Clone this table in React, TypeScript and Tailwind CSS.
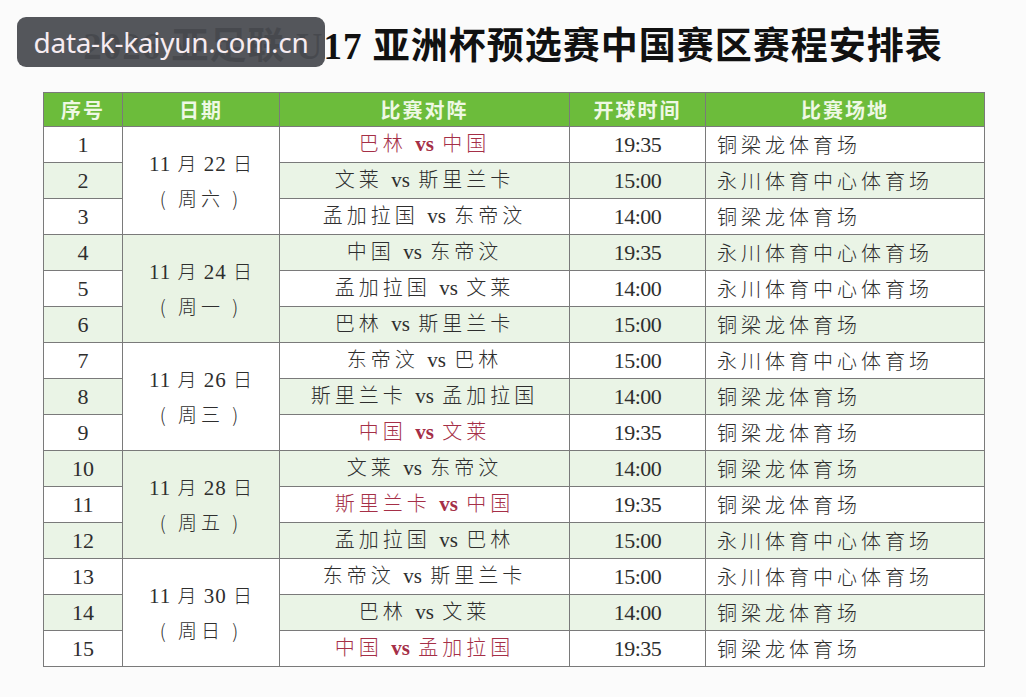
const matches = [
  { no: 1, home: "巴林", away: "中国", time: "19:35", venue: "铜梁龙体育场", hi: true },
  { no: 2, home: "文莱", away: "斯里兰卡", time: "15:00", venue: "永川体育中心体育场" },
  { no: 3, home: "孟加拉国", away: "东帝汶", time: "14:00", venue: "铜梁龙体育场" },
  { no: 4, home: "中国", away: "东帝汶", time: "19:35", venue: "永川体育中心体育场" },
  { no: 5, home: "孟加拉国", away: "文莱", time: "14:00", venue: "永川体育中心体育场" },
  { no: 6, home: "巴林", away: "斯里兰卡", time: "15:00", venue: "铜梁龙体育场" },
  { no: 7, home: "东帝汶", away: "巴林", time: "15:00", venue: "永川体育中心体育场" },
  { no: 8, home: "斯里兰卡", away: "孟加拉国", time: "14:00", venue: "铜梁龙体育场" },
  { no: 9, home: "中国", away: "文莱", time: "19:35", venue: "铜梁龙体育场", hi: true },
  { no: 10, home: "文莱", away: "东帝汶", time: "14:00", venue: "铜梁龙体育场" },
  { no: 11, home: "斯里兰卡", away: "中国", time: "19:35", venue: "铜梁龙体育场", hi: true },
  { no: 12, home: "孟加拉国", away: "巴林", time: "15:00", venue: "永川体育中心体育场" },
  { no: 13, home: "东帝汶", away: "斯里兰卡", time: "15:00", venue: "永川体育中心体育场" },
  { no: 14, home: "巴林", away: "文莱", time: "14:00", venue: "铜梁龙体育场" },
  { no: 15, home: "中国", away: "孟加拉国", time: "19:35", venue: "铜梁龙体育场", hi: true },
];

const dates: Record<number, { day: string; week: string }> = {
  1: { day: "22", week: "周六" },
  4: { day: "24", week: "周一" },
  7: { day: "26", week: "周三" },
  10: { day: "28", week: "周五" },
  13: { day: "30", week: "周日" },
};

const serif = "font-['Liberation_Serif','Noto_Sans_CJK_SC',serif]";
const cell = "border border-[#7a7a7a] p-0";

export default function App() {
  return (
    <div className="relative min-h-[697px] w-[1026px] bg-[#fbfbfb] pt-[23px]">
      {/* watermark */}
      <div className="absolute left-[17px] top-[17px] flex h-[50px] w-[308px] items-center justify-center rounded-[9px] bg-[#4b4d52]/95 font-['Noto_Sans',sans-serif] text-[28px] tracking-[-0.3px] text-[#f7ecf1]">
        data-k-kaiyun.com.cn
      </div>

      <h1 className={`${serif} text-center text-[37px] leading-[48px] font-bold tracking-[1px] text-[#111]`}>
        2026 亚足联 U17 亚洲杯预选赛中国赛区赛程安排表
      </h1>

      <table className="mt-[21px] ml-[43px] w-[941px] table-fixed border-collapse">
        <colgroup>
          <col className="w-[79px]" />
          <col className="w-[157px]" />
          <col className="w-[290px]" />
          <col className="w-[136px]" />
          <col className="w-[279px]" />
        </colgroup>
        <thead>
          <tr className="h-[34px] bg-[#6cbc3b] font-['Noto_Sans_CJK_SC',sans-serif] text-[20px] font-bold tracking-[2px] text-[#eef8e4]">
            <th className={cell}>序号</th>
            <th className={cell}>日期</th>
            <th className={cell}>比赛对阵</th>
            <th className={cell}>开球时间</th>
            <th className={cell}>比赛场地</th>
          </tr>
        </thead>
        <tbody className="text-[#2e2e2e]">
          {matches.map((m, i) => {
            const d = dates[m.no];
            const groupGreen = Math.floor(i / 3) % 2 === 1;
            return (
              <tr key={m.no} className={`h-[36px] ${i % 2 === 1 ? "bg-[#eaf4e6]" : "bg-white"}`}>
                <td className={`${cell} ${serif} text-center text-[22px]`}>{m.no}</td>
                {d && (
                  <td
                    rowSpan={3}
                    className={`${cell} ${serif} text-center ${groupGreen ? "bg-[#e9f3e4]" : "bg-white"}`}
                  >
                    <div className="text-[21px] leading-[34px] tracking-[1px]">
                      11 <span className="font-['Noto_Sans_CJK_SC',sans-serif] text-[19px] font-light">月</span> {d.day}{" "}
                      <span className="font-['Noto_Sans_CJK_SC',sans-serif] text-[19px] font-light">日</span>
                    </div>
                    <div className="font-['Noto_Sans_CJK_SC',sans-serif] text-[19px] leading-[34px] font-light tracking-[4px]">
                      ( {d.week} )
                    </div>
                  </td>
                )}
                <td
                  className={`${cell} text-center font-['Noto_Sans_CJK_SC',sans-serif] text-[20px] font-light tracking-[4px] ${
                    m.hi ? "text-[#a52f47]" : ""
                  }`}
                >
                  {m.home}{" "}
                  <span className={`${serif} text-[21px] tracking-normal ${m.hi ? "font-bold" : ""}`}>vs</span>{" "}
                  {m.away}
                </td>
                <td className={`${cell} ${serif} text-center text-[22px] tracking-[-0.5px]`}>{m.time}</td>
                <td className={`${cell} pl-[11px] text-left font-['Noto_Sans_CJK_SC',sans-serif] text-[20px] font-light tracking-[4px]`}>
                  {m.venue}
                </td>
              </tr>
            );
          })}
        </tbody>
      </table>
    </div>
  );
}
